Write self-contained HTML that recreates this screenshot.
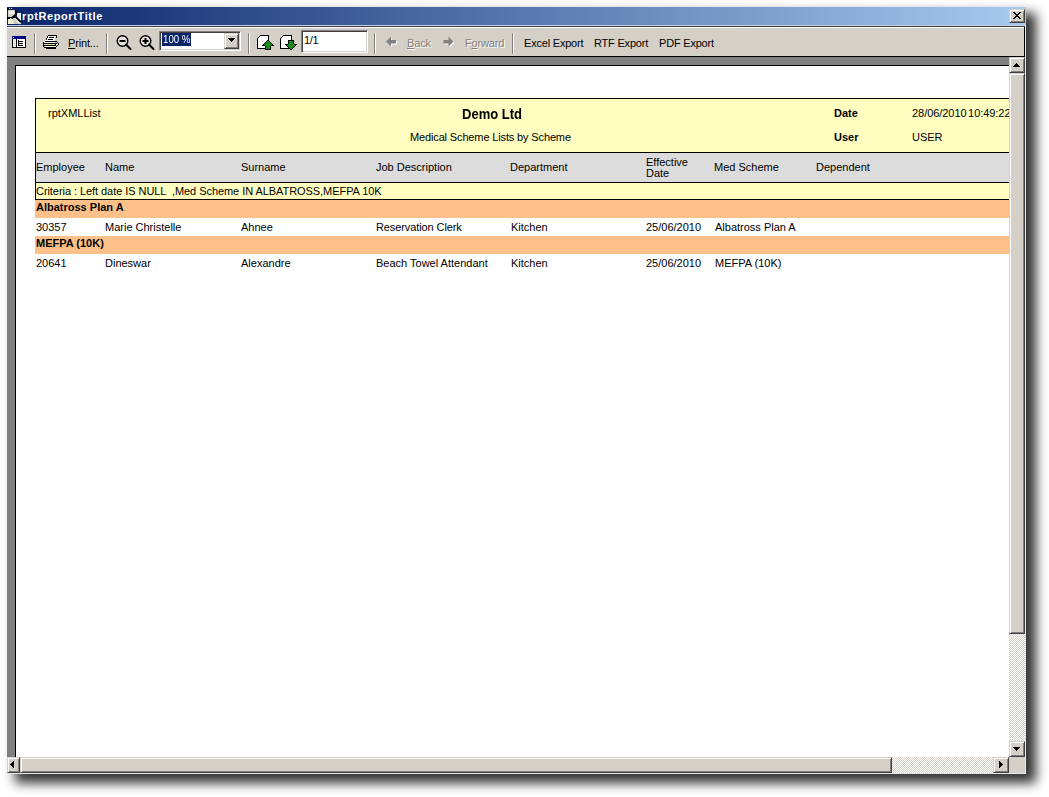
<!DOCTYPE html>
<html><head><meta charset="utf-8">
<style>
*{margin:0;padding:0;box-sizing:border-box}
html,body{width:1049px;height:797px;overflow:hidden;background:#fff;font-family:"Liberation Sans",sans-serif}
.a{position:absolute}
svg{position:absolute;display:block;shape-rendering:crispEdges}
#shadow{position:absolute;left:15px;top:13px;width:1021px;height:770px;background:#000;filter:blur(6px);opacity:.8}
.tb{position:absolute;font-size:11px;line-height:13px;color:#000;white-space:nowrap;letter-spacing:-0.15px}
.dis{color:#808080;text-shadow:1px 1px 0 #fff}
.sep{position:absolute;top:33px;width:2px;height:21px;border-left:1px solid #808080;border-right:1px solid #fff}
.rp{position:absolute;font-size:11px;line-height:13px;color:#000;white-space:nowrap}
.b{font-weight:bold}
.btn{position:absolute;background:#d4d0c8;border-top:1px solid #d4d0c8;border-left:1px solid #d4d0c8;border-right:1px solid #404040;border-bottom:1px solid #404040;box-shadow:inset 1px 1px 0 #fff,inset -1px -1px 0 #808080}
.track{position:absolute;background-color:#fff;background-image:linear-gradient(45deg,#d4d0c8 25%,transparent 25%,transparent 75%,#d4d0c8 75%),linear-gradient(45deg,#d4d0c8 25%,transparent 25%,transparent 75%,#d4d0c8 75%);background-size:2px 2px;background-position:0 0,1px 1px}
</style></head><body>
<div id="shadow"></div>
<!-- window base -->
<div class="a" style="left:7px;top:7px;width:1019px;height:767px;background:#d4d0c8"></div>
<!-- title -->
<div class="a" style="left:7px;top:7px;width:1019px;height:18px;background:linear-gradient(to right,#0a246a,#a6caf0)"></div>
<svg style="left:7px;top:8px;shape-rendering:auto" width="15" height="17" viewBox="0 0 15 17">
  <rect x="0" y="0" width="2" height="2" fill="#000"/>
  <rect x="2" y="0" width="1" height="1" fill="#c0c8e0"/><rect x="4" y="0" width="1" height="1" fill="#c0c8e0"/>
  <rect x="1" y="2" width="7" height="7" fill="#d6d2c4"/>
  <rect x="2" y="3" width="5" height="3" fill="#efede4"/>
  <rect x="10" y="5" width="4" height="9" fill="#f2f2ee"/>
  <rect x="1" y="10" width="7" height="6" fill="#efeed2"/>
  <path d="M6 10 L10 10 L14 14 L14 16 L7 16 Z" fill="#c4c8c0"/>
  <rect x="0" y="9" width="3" height="2" fill="#000"/>
  <path d="M4.5 10.5 L8.5 7" stroke="#000" stroke-width="2.2"/>
  <path d="M8.6 1.5 L9.4 6.5" stroke="#000" stroke-width="1.4"/>
  <path d="M9 9.2 L14 14.2" stroke="#000" stroke-width="1.8"/>
  <path d="M8 11 L13 16" stroke="#e8ecf0" stroke-width="1.2"/>
</svg>
<div class="a" style="left:22px;top:10px;color:#fff;font-weight:bold;font-size:11px;line-height:13px;white-space:nowrap;letter-spacing:0.6px">rptReportTitle</div>
<div class="btn" style="left:1009px;top:9px;width:16px;height:14px"></div>
<svg style="left:1013px;top:12px" width="8" height="7" viewBox="0 0 8 7">
  <path d="M0 0h2v1h1v1h2v-1h1v-1h2v1h-1v1h-1v1h-1v1h1v1h1v1h1v1h-2v-1h-1v-1h-2v1h-1v1h-2v-1h1v-1h1v-1h1v-1h-1v-1h-1v-1h-1z" fill="#000"/>
</svg>
<!-- frame strip -->
<div class="a" style="left:7px;top:25px;width:1019px;height:1px;background:#c4d0e8"></div>
<div class="a" style="left:7px;top:26px;width:1019px;height:1px;background:#404040"></div>
<div class="a" style="left:7px;top:27px;width:1017px;height:1px;background:#fff"></div>
<div class="a" style="left:1024px;top:27px;width:1px;height:30px;background:#000"></div>
<div class="a" style="left:1025px;top:25px;width:1px;height:749px;background:#e8e8e8"></div>
<div class="a" style="left:7px;top:56px;width:1018px;height:1px;background:#000"></div>
<!-- toolbar icons -->
<svg style="left:12px;top:36px" width="14" height="12" viewBox="0 0 14 12">
  <rect x="0" y="0" width="14" height="12" fill="#000"/>
  <rect x="0" y="0" width="14" height="3" fill="#000080"/>
  <rect x="1" y="1" width="1" height="1" fill="#fff"/>
  <rect x="1" y="3" width="3" height="8" fill="#e8e8e0"/>
  <rect x="5" y="3" width="8" height="8" fill="#fff"/>
  <rect x="6" y="4" width="1" height="6" fill="#000"/>
  <rect x="6" y="5" width="5" height="1" fill="#000"/>
  <rect x="6" y="7" width="5" height="1" fill="#000"/>
  <rect x="6" y="9" width="5" height="1" fill="#000"/>
</svg>
<div class="sep" style="left:34px"></div>
<svg style="left:43px;top:35px" width="16" height="14" viewBox="0 0 16 14">
  <rect x="5" y="0" width="9" height="1" fill="#000"/>
  <path d="M5 1h8l-2 5h-9z" fill="#fff"/>
  <rect x="4" y="1" width="1" height="2" fill="#000"/>
  <rect x="3" y="3" width="1" height="2" fill="#000"/>
  <rect x="13" y="1" width="1" height="2" fill="#000"/>
  <rect x="6" y="2" width="5" height="1" fill="#000"/>
  <rect x="5" y="4" width="5" height="1" fill="#000"/>
  <rect x="2" y="6" width="11" height="1" fill="#000"/>
  <rect x="0" y="7" width="1" height="5" fill="#000"/>
  <rect x="1" y="7" width="11" height="1" fill="#fff"/>
  <rect x="1" y="8" width="12" height="1" fill="#000"/>
  <rect x="1" y="9" width="11" height="1" fill="#f0f4c8"/>
  <rect x="4" y="9" width="6" height="1" fill="#d8e880"/>
  <rect x="1" y="10" width="12" height="1" fill="#000"/>
  <rect x="3" y="11" width="9" height="1" fill="#fff"/>
  <rect x="3" y="12" width="10" height="2" fill="#000"/>
  <rect x="1" y="12" width="2" height="1" fill="#000"/>
  <rect x="12" y="6" width="2" height="1" fill="#000"/><rect x="14" y="7" width="1" height="1" fill="#000"/>
  <rect x="13" y="8" width="1" height="1" fill="#000"/><rect x="15" y="8" width="1" height="2" fill="#000"/>
  <rect x="14" y="10" width="1" height="1" fill="#000"/><rect x="13" y="11" width="1" height="1" fill="#000"/>
  <rect x="12" y="9" width="1" height="1" fill="#000"/><rect x="14" y="9" width="1" height="1" fill="#fff"/>
</svg>
<div class="tb" style="left:68px;top:37px"><u>P</u>rint...</div>
<div class="sep" style="left:106px"></div>
<svg style="left:115px;top:34px;shape-rendering:auto" width="18" height="18" viewBox="0 0 18 18">
  <circle cx="7.5" cy="7" r="5.3" fill="#e6e4de" stroke="#000" stroke-width="1.4"/>
  <rect x="4.5" y="6" width="6" height="2" fill="#000"/>
  <path d="M11 10.5 L15.5 15" stroke="#000" stroke-width="2" stroke-linecap="round"/>
</svg>
<svg style="left:138px;top:34px;shape-rendering:auto" width="18" height="18" viewBox="0 0 18 18">
  <circle cx="7.5" cy="7" r="5.3" fill="#e6e4de" stroke="#000" stroke-width="1.4"/>
  <rect x="4.5" y="6" width="6" height="2" fill="#000"/>
  <rect x="6.5" y="4" width="2" height="6" fill="#000"/>
  <path d="M11 10.5 L15.5 15" stroke="#000" stroke-width="2" stroke-linecap="round"/>
</svg>
<!-- combo -->
<div class="a" style="left:159px;top:31px;width:82px;height:20px;background:#fff;border-top:1px solid #808080;border-left:1px solid #808080;border-right:1px solid #fff;border-bottom:1px solid #fff;box-shadow:inset 1px 1px 0 #404040,inset -1px -1px 0 #d4d0c8"></div>
<div class="a" style="left:162px;top:33px;width:29px;height:13px;background:#0a246a"></div>
<div class="a" style="left:163px;top:32px;color:#fff;font-size:11px;line-height:14px;white-space:nowrap;transform:scaleX(0.88);transform-origin:0 0">100 %</div>
<div class="btn" style="left:224px;top:33px;width:15px;height:16px"></div>
<svg style="left:228px;top:38px" width="7" height="4" viewBox="0 0 7 4"><path d="M0 0h7v1h-1v1h-1v1h-1v1h-1v-1h-1v-1h-1v-1h-1z" fill="#000"/></svg>
<div class="sep" style="left:248px"></div>
<!-- page icons -->
<svg style="left:257px;top:35px" width="17" height="16" viewBox="0 0 17 16"><rect x="3" y="0" width="9" height="1" fill="#000"/><rect x="2" y="1" width="1" height="1" fill="#000"/><rect x="11" y="1" width="1" height="1" fill="#000"/><rect x="1" y="2" width="1" height="1" fill="#000"/><rect x="11" y="2" width="1" height="1" fill="#000"/><rect x="0" y="3" width="1" height="1" fill="#000"/><rect x="11" y="3" width="1" height="1" fill="#000"/><rect x="0" y="4" width="1" height="1" fill="#000"/><rect x="11" y="4" width="1" height="1" fill="#000"/><rect x="0" y="5" width="1" height="1" fill="#000"/><rect x="11" y="5" width="1" height="1" fill="#000"/><rect x="0" y="6" width="1" height="1" fill="#000"/><rect x="11" y="6" width="1" height="1" fill="#000"/><rect x="0" y="7" width="1" height="1" fill="#000"/><rect x="11" y="7" width="1" height="1" fill="#000"/><rect x="0" y="8" width="1" height="1" fill="#000"/><rect x="11" y="8" width="1" height="1" fill="#000"/><rect x="0" y="9" width="1" height="1" fill="#000"/><rect x="11" y="9" width="1" height="1" fill="#000"/><rect x="0" y="10" width="1" height="1" fill="#000"/><rect x="11" y="10" width="1" height="1" fill="#000"/><rect x="0" y="11" width="1" height="1" fill="#000"/><rect x="11" y="11" width="1" height="1" fill="#000"/><rect x="0" y="12" width="1" height="1" fill="#000"/><rect x="11" y="12" width="1" height="1" fill="#000"/><rect x="0" y="13" width="12" height="1" fill="#000"/><rect x="3" y="1" width="8" height="1" fill="#fff"/><rect x="2" y="2" width="9" height="1" fill="#fff"/><rect x="1" y="3" width="10" height="1" fill="#fff"/><rect x="1" y="4" width="10" height="1" fill="#fff"/><rect x="1" y="5" width="10" height="1" fill="#fff"/><rect x="1" y="6" width="10" height="1" fill="#fff"/><rect x="1" y="7" width="10" height="1" fill="#fff"/><rect x="1" y="8" width="10" height="1" fill="#fff"/><rect x="1" y="9" width="10" height="1" fill="#fff"/><rect x="1" y="10" width="10" height="1" fill="#fff"/><rect x="1" y="11" width="10" height="1" fill="#fff"/><rect x="1" y="12" width="10" height="1" fill="#fff"/><rect x="10" y="5" width="2" height="1" fill="#000"/><rect x="9" y="6" width="1" height="1" fill="#000"/><rect x="12" y="6" width="1" height="1" fill="#000"/><rect x="8" y="7" width="1" height="1" fill="#000"/><rect x="13" y="7" width="1" height="1" fill="#000"/><rect x="7" y="8" width="1" height="1" fill="#000"/><rect x="14" y="8" width="1" height="1" fill="#000"/><rect x="6" y="9" width="1" height="1" fill="#000"/><rect x="15" y="9" width="1" height="1" fill="#000"/><rect x="5" y="10" width="3" height="1" fill="#000"/><rect x="14" y="10" width="3" height="1" fill="#000"/><rect x="8" y="11" width="1" height="1" fill="#000"/><rect x="13" y="11" width="1" height="1" fill="#000"/><rect x="8" y="12" width="1" height="1" fill="#000"/><rect x="13" y="12" width="1" height="1" fill="#000"/><rect x="8" y="13" width="1" height="1" fill="#000"/><rect x="13" y="13" width="1" height="1" fill="#000"/><rect x="8" y="14" width="6" height="1" fill="#000"/><rect x="10" y="6" width="2" height="1" fill="#1a8c1a"/><rect x="9" y="7" width="4" height="1" fill="#1a8c1a"/><rect x="8" y="8" width="6" height="1" fill="#1a8c1a"/><rect x="7" y="9" width="8" height="1" fill="#1a8c1a"/><rect x="8" y="10" width="6" height="1" fill="#1a8c1a"/><rect x="9" y="11" width="4" height="1" fill="#1a8c1a"/><rect x="9" y="12" width="4" height="1" fill="#1a8c1a"/><rect x="9" y="13" width="4" height="1" fill="#1a8c1a"/></svg>
<svg style="left:280px;top:35px" width="17" height="16" viewBox="0 0 17 16"><rect x="3" y="0" width="9" height="1" fill="#000"/><rect x="2" y="1" width="1" height="1" fill="#000"/><rect x="11" y="1" width="1" height="1" fill="#000"/><rect x="1" y="2" width="1" height="1" fill="#000"/><rect x="11" y="2" width="1" height="1" fill="#000"/><rect x="0" y="3" width="1" height="1" fill="#000"/><rect x="11" y="3" width="1" height="1" fill="#000"/><rect x="0" y="4" width="1" height="1" fill="#000"/><rect x="11" y="4" width="1" height="1" fill="#000"/><rect x="0" y="5" width="1" height="1" fill="#000"/><rect x="11" y="5" width="1" height="1" fill="#000"/><rect x="0" y="6" width="1" height="1" fill="#000"/><rect x="11" y="6" width="1" height="1" fill="#000"/><rect x="0" y="7" width="1" height="1" fill="#000"/><rect x="11" y="7" width="1" height="1" fill="#000"/><rect x="0" y="8" width="1" height="1" fill="#000"/><rect x="11" y="8" width="1" height="1" fill="#000"/><rect x="0" y="9" width="1" height="1" fill="#000"/><rect x="11" y="9" width="1" height="1" fill="#000"/><rect x="0" y="10" width="1" height="1" fill="#000"/><rect x="11" y="10" width="1" height="1" fill="#000"/><rect x="0" y="11" width="1" height="1" fill="#000"/><rect x="11" y="11" width="1" height="1" fill="#000"/><rect x="0" y="12" width="1" height="1" fill="#000"/><rect x="11" y="12" width="1" height="1" fill="#000"/><rect x="0" y="13" width="12" height="1" fill="#000"/><rect x="3" y="1" width="8" height="1" fill="#fff"/><rect x="2" y="2" width="9" height="1" fill="#fff"/><rect x="1" y="3" width="10" height="1" fill="#fff"/><rect x="1" y="4" width="10" height="1" fill="#fff"/><rect x="1" y="5" width="10" height="1" fill="#fff"/><rect x="1" y="6" width="10" height="1" fill="#fff"/><rect x="1" y="7" width="10" height="1" fill="#fff"/><rect x="1" y="8" width="10" height="1" fill="#fff"/><rect x="1" y="9" width="10" height="1" fill="#fff"/><rect x="1" y="10" width="10" height="1" fill="#fff"/><rect x="1" y="11" width="10" height="1" fill="#fff"/><rect x="1" y="12" width="10" height="1" fill="#fff"/><rect x="8" y="5" width="6" height="1" fill="#000"/><rect x="8" y="6" width="1" height="1" fill="#000"/><rect x="13" y="6" width="1" height="1" fill="#000"/><rect x="8" y="7" width="1" height="1" fill="#000"/><rect x="13" y="7" width="1" height="1" fill="#000"/><rect x="8" y="8" width="1" height="1" fill="#000"/><rect x="13" y="8" width="1" height="1" fill="#000"/><rect x="5" y="9" width="3" height="1" fill="#000"/><rect x="14" y="9" width="3" height="1" fill="#000"/><rect x="6" y="10" width="1" height="1" fill="#000"/><rect x="15" y="10" width="1" height="1" fill="#000"/><rect x="7" y="11" width="1" height="1" fill="#000"/><rect x="14" y="11" width="1" height="1" fill="#000"/><rect x="8" y="12" width="1" height="1" fill="#000"/><rect x="13" y="12" width="1" height="1" fill="#000"/><rect x="9" y="13" width="1" height="1" fill="#000"/><rect x="12" y="13" width="1" height="1" fill="#000"/><rect x="10" y="14" width="2" height="1" fill="#000"/><rect x="9" y="6" width="4" height="1" fill="#1a8c1a"/><rect x="9" y="7" width="4" height="1" fill="#1a8c1a"/><rect x="9" y="8" width="4" height="1" fill="#1a8c1a"/><rect x="8" y="9" width="6" height="1" fill="#1a8c1a"/><rect x="7" y="10" width="8" height="1" fill="#1a8c1a"/><rect x="8" y="11" width="6" height="1" fill="#1a8c1a"/><rect x="9" y="12" width="4" height="1" fill="#1a8c1a"/><rect x="10" y="13" width="2" height="1" fill="#1a8c1a"/></svg>
<!-- page box -->
<div class="a" style="left:301px;top:30px;width:67px;height:23px;background:#fff;border-top:1px solid #808080;border-left:1px solid #808080;border-right:1px solid #fff;border-bottom:1px solid #fff;box-shadow:inset 1px 1px 0 #404040,inset -1px -1px 0 #d4d0c8"></div>
<div class="tb" style="left:304px;top:34px;letter-spacing:-0.3px">1/1</div>
<div class="sep" style="left:374px"></div>
<!-- back/forward -->
<svg style="left:386px;top:36px;shape-rendering:auto" width="13" height="13" viewBox="0 0 13 13">
  <path d="M0 5.5 L5 0.5 L5 4 L10 4 L10 7.5 L5 7.5 L5 10.5 Z" fill="#fff" transform="translate(1,1)"/>
  <path d="M0 5.5 L5 0.5 L5 4 L10 4 L10 7.5 L5 7.5 L5 10.5 Z" fill="#808080"/>
</svg>
<div class="tb dis" style="left:407px;top:37px"><u>B</u>ack</div>
<svg style="left:443px;top:36px;shape-rendering:auto" width="13" height="13" viewBox="0 0 13 13">
  <path d="M10.5 5.5 L5.5 0.5 L5.5 4 L0.5 4 L0.5 7.5 L5.5 7.5 L5.5 10.5 Z" fill="#fff" transform="translate(1,1)"/>
  <path d="M10.5 5.5 L5.5 0.5 L5.5 4 L0.5 4 L0.5 7.5 L5.5 7.5 L5.5 10.5 Z" fill="#808080"/>
</svg>
<div class="tb dis" style="left:465px;top:37px">F<u>o</u>rward</div>
<div class="sep" style="left:512px"></div>
<div class="tb" style="left:524px;top:37px;letter-spacing:-0.2px">Excel Export</div>
<div class="tb" style="left:594px;top:37px;letter-spacing:-0.2px">RTF Export</div>
<div class="tb" style="left:659px;top:37px;letter-spacing:-0.2px">PDF Export</div>

<!-- viewport -->
<div class="a" style="left:7px;top:57px;width:1002px;height:700px;background:#808080;overflow:hidden">
  <div class="a" style="left:8px;top:8px;width:1100px;height:800px;background:#fff;border-top:1px solid #000;border-left:1px solid #000"></div>
  <div class="a" style="left:-7px;top:-57px;width:1049px;height:797px">
<div class="a" style="left:35px;top:98px;width:974px;height:102px;border-top:1px solid #000;border-left:1px solid #000;background:#fffdc0"></div>
<div class="a" style="left:36px;top:152px;width:973px;height:1px;background:#000"></div>
<div class="a" style="left:36px;top:153px;width:973px;height:29px;background:#dcdcdc"></div>
<div class="a" style="left:36px;top:182px;width:973px;height:1px;background:#000"></div>
<div class="a" style="left:36px;top:199px;width:973px;height:1px;background:#000"></div>
<div class="a" style="left:35px;top:200px;width:974px;height:18px;background:#fdc088"></div>
<div class="a" style="left:35px;top:236px;width:974px;height:18px;background:#fdc088"></div>
<div class="rp" style="left:48px;top:107px">rptXMLList</div>
<div class="rp b" style="left:462px;top:106px;font-size:14px;line-height:16px;transform:scaleX(0.93);transform-origin:0 0">Demo Ltd</div>
<div class="rp" style="left:410px;top:131px;letter-spacing:-0.14px">Medical Scheme Lists by Scheme</div>
<div class="rp b" style="left:834px;top:107px">Date</div>
<div class="rp" style="left:912px;top:107px;word-spacing:-1.5px;letter-spacing:-0.05px">28/06/2010 10:49:22</div>
<div class="rp b" style="left:834px;top:131px">User</div>
<div class="rp" style="left:912px;top:131px">USER</div>
<div class="rp" style="left:36px;top:161px">Employee</div>
<div class="rp" style="left:105px;top:161px">Name</div>
<div class="rp" style="left:241px;top:161px">Surname</div>
<div class="rp" style="left:376px;top:161px">Job Description</div>
<div class="rp" style="left:510px;top:161px">Department</div>
<div class="rp" style="left:646px;top:157px;line-height:11px">Effective<br>Date</div>
<div class="rp" style="left:714px;top:161px">Med Scheme</div>
<div class="rp" style="left:816px;top:161px">Dependent</div>
<div class="rp" style="left:36px;top:185px;white-space:pre;letter-spacing:-0.06px">Criteria : Left date IS NULL  ,Med Scheme IN ALBATROSS,MEFPA 10K</div>
<div class="rp b" style="left:36px;top:201px">Albatross Plan A</div>
<div class="rp" style="left:36px;top:221px">30357</div>
<div class="rp" style="left:105px;top:221px">Marie Christelle</div>
<div class="rp" style="left:241px;top:221px">Ahnee</div>
<div class="rp" style="left:376px;top:221px;letter-spacing:-0.1px">Reservation Clerk</div>
<div class="rp" style="left:511px;top:221px">Kitchen</div>
<div class="rp" style="left:646px;top:221px">25/06/2010</div>
<div class="rp" style="left:715px;top:221px">Albatross Plan A</div>
<div class="rp b" style="left:36px;top:237px">MEFPA (10K)</div>
<div class="rp" style="left:36px;top:257px">20641</div>
<div class="rp" style="left:105px;top:257px">Dineswar</div>
<div class="rp" style="left:241px;top:257px">Alexandre</div>
<div class="rp" style="left:376px;top:257px">Beach Towel Attendant</div>
<div class="rp" style="left:511px;top:257px">Kitchen</div>
<div class="rp" style="left:646px;top:257px">25/06/2010</div>
<div class="rp" style="left:715px;top:257px">MEFPA (10K)</div>
  </div>
</div>
<!-- v scrollbar -->
<div class="track" style="left:1009px;top:57px;width:16px;height:700px"></div>
<div class="btn" style="left:1009px;top:57px;width:16px;height:16px"></div>
<svg style="left:1013px;top:63px" width="7" height="4" viewBox="0 0 7 4"><path d="M3 0h1v1h1v1h1v1h1v1h-7v-1h1v-1h1v-1h1z" fill="#000"/></svg>
<div class="btn" style="left:1009px;top:73px;width:16px;height:561px"></div>
<div class="btn" style="left:1009px;top:741px;width:16px;height:16px"></div>
<svg style="left:1013px;top:747px" width="7" height="4" viewBox="0 0 7 4"><path d="M0 0h7v1h-1v1h-1v1h-1v1h-1v-1h-1v-1h-1v-1h-1z" fill="#000"/></svg>
<!-- h scrollbar -->
<div class="track" style="left:7px;top:757px;width:1002px;height:16px"></div>
<div class="btn" style="left:7px;top:757px;width:13px;height:16px"></div>
<svg style="left:10px;top:761px" width="4" height="7" viewBox="0 0 4 7"><path d="M3 0h1v7h-1v-1h-1v-1h-1v-1h-1v-1h1v-1h1v-1h1z" fill="#000"/></svg>
<div class="btn" style="left:20px;top:757px;width:872px;height:16px"></div>
<div class="btn" style="left:993px;top:757px;width:16px;height:16px"></div>
<svg style="left:999px;top:761px" width="4" height="7" viewBox="0 0 4 7"><path d="M0 0h1v1h1v1h1v1h1v1h-1v1h-1v1h-1v1h-1z" fill="#000"/></svg>
<div class="a" style="left:1009px;top:757px;width:16px;height:16px;background:#d4d0c8"></div>
<div class="a" style="left:7px;top:773px;width:1019px;height:1px;background:#e8e8e8"></div>
</body></html>
